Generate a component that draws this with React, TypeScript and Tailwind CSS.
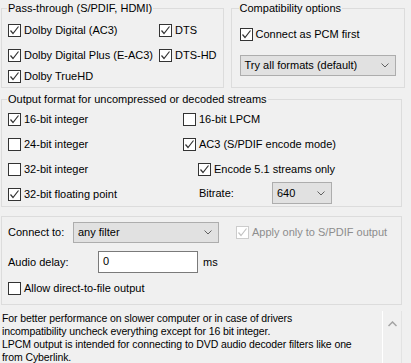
import React from "react";

const FONT = { fontFamily: '"Liberation Sans", Arial, sans-serif' };

function CheckMark({ disabled }: { disabled?: boolean }) {
  return (
    <svg width="11" height="11" viewBox="0 0 11 11" className="block">
      <polyline
        points="1.5,5.5 4,8.5 9.5,1.5"
        fill="none"
        stroke={disabled ? "#c4c4c4" : "#333333"}
        strokeWidth="1.2"
      />
    </svg>
  );
}

function Check({
  label,
  checked,
  disabled,
  className = "",
}: {
  label: string;
  checked?: boolean;
  disabled?: boolean;
  className?: string;
}) {
  return (
    <label className={`flex items-center gap-[3px] h-[13px] ${className}`}>
      <span
        className={`flex h-[13px] w-[13px] shrink-0 items-center justify-center border bg-white ${
          disabled ? "border-[#cccccc]" : "border-[#333333]"
        }`}
      >
        {checked && <CheckMark disabled={disabled} />}
      </span>
      <span className={`whitespace-nowrap ${disabled ? "text-[#8d8d8d]" : "text-black"}`}>
        {label}
      </span>
    </label>
  );
}

function Combo({ value, className = "" }: { value: string; className?: string }) {
  return (
    <div
      className={`flex items-center justify-between border border-[#adadad] bg-[#e1e1e1] pl-[4px] pr-[6px] ${className}`}
    >
      <span className="whitespace-nowrap">{value}</span>
      <svg width="8" height="5" viewBox="0 0 8 5">
        <polyline points="0.5,0.5 4,4 7.5,0.5" fill="none" stroke="#606060" strokeWidth="1" />
      </svg>
    </div>
  );
}

export default function App() {
  return (
    <div
      className="h-[363px] w-[411px] overflow-hidden bg-[#f0f0f0] text-[11px] leading-[13px] text-black"
      style={FONT}
    >
      <div className="flex gap-[7px] pl-[1px] pr-[9px] pt-[2px]">
        <fieldset className="h-[86px] w-[220px] border border-[#dcdcdc] px-[6px]">
          <legend className="-ml-[1px] px-[1px]">Pass-through (S/PDIF, HDMI)</legend>
          <div className="mt-[9px] flex flex-col">
            <div className="flex">
              <Check label="Dolby Digital (AC3)" checked className="w-[151px]" />
              <Check label="DTS" checked />
            </div>
            <div className="mt-[12px] flex">
              <Check label="Dolby Digital Plus (E-AC3)" checked className="w-[151px]" />
              <Check label="DTS-HD" checked />
            </div>
            <Check label="Dolby TrueHD" checked className="mt-[8px]" />
          </div>
        </fieldset>
        <fieldset className="h-[86px] flex-1 border border-[#dcdcdc] px-[8px]">
          <legend className="-ml-[1px] px-[1px]">Compatibility options</legend>
          <Check label="Connect as PCM first" checked className="mt-[13px]" />
          <Combo value="Try all formats (default)" className="mt-[14px] h-[21px] w-[156px]" />
        </fieldset>
      </div>

      <fieldset className="ml-[1px] mt-[5px] h-[114px] w-[401px] border border-[#dcdcdc] px-[6px]">
        <legend className="-ml-[1px] px-[1px]">
          Output format for uncompressed or decoded streams
        </legend>
        <div className="mt-[7px] grid grid-cols-[175px_1fr] gap-y-[12px]">
          <Check label="16-bit integer" checked />
          <Check label="16-bit LPCM" />
          <Check label="24-bit integer" />
          <Check label="AC3 (S/PDIF encode mode)" checked />
          <Check label="32-bit integer" />
          <Check label="Encode 5.1 streams only" checked className="ml-[15px]" />
          <Check label="32-bit floating point" checked />
          <div className="-mt-[6px] flex items-center pl-[16px]">
            <span className="w-[73px]">Bitrate:</span>
            <Combo value="640" className="h-[22px] w-[60px]" />
          </div>
        </div>
      </fieldset>

      <div className="ml-[1px] mt-[9px] flex h-[89px] w-[401px] flex-col border border-[#dcdcdc] px-[6px] pt-[5px]">
        <div className="flex items-center">
          <span className="w-[65px]">Connect to:</span>
          <Combo value="any filter" className="h-[21px] w-[146px]" />
          <Check label="Apply only to S/PDIF output" checked disabled className="ml-[17px]" />
        </div>
        <div className="mt-[8px] flex items-center">
          <span className="w-[90px]">Audio delay:</span>
          <div className="h-[22px] w-[100px] border border-[#7a7a7a] bg-white pl-[4px] pt-[3px]">0</div>
          <span className="ml-[5px]">ms</span>
        </div>
        <Check label="Allow direct-to-file output" className="mt-[9px]" />
      </div>

      <div className="mt-[2px] flex h-[60px]">
        <div className="min-w-0 flex-1 whitespace-nowrap pl-[2px] pt-[5px] text-[10.5px] tracking-[-0.1px]">
          <div>For better performance on slower computer or in case of drivers</div>
          <div>incompatibility uncheck everything except for 16 bit integer.</div>
          <div>LPCM output is intended for connecting to DVD audio decoder filters like one</div>
          <div>from Cyberlink.</div>
        </div>
        <div className="mt-[4px] flex w-[29px] shrink-0 border-l border-white">
          <div className="flex w-[18px] justify-center pt-[10px]">
            <svg width="9" height="6" viewBox="0 0 9 6">
              <polyline points="0.5,5 4.5,1 8.5,5" fill="none" stroke="#a3a3a3" strokeWidth="1.5" />
            </svg>
          </div>
          <div className="w-[10px] border-l border-[#e3e3e3]" />
        </div>
      </div>
    </div>
  );
}
